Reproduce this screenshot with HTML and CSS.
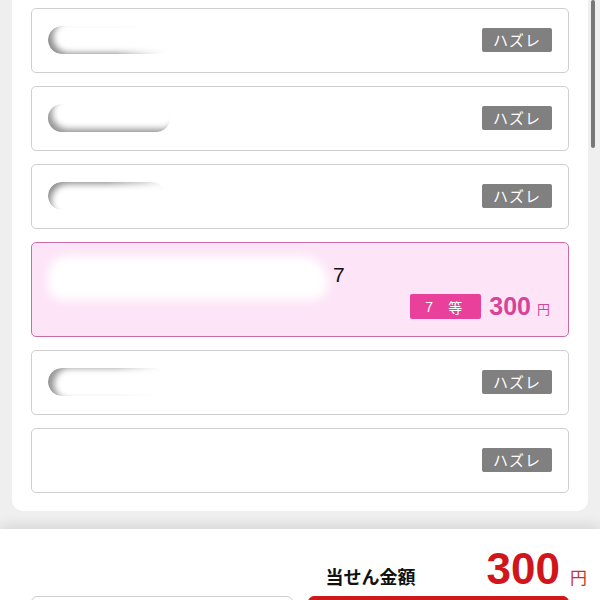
FILE: index.html
```html
<!DOCTYPE html>
<html lang="ja">
<head>
<meta charset="utf-8">
<title>当せん結果</title>
<link rel="stylesheet" href="styles.css">
</head>
<body>
<div class="page">
  <section class="panel">
    <div class="card">
      <div class="blob blob-a"></div>
      <span class="lose">ハズレ</span>
    </div>
    <div class="card">
      <div class="blob blob-b"></div>
      <span class="lose">ハズレ</span>
    </div>
    <div class="card">
      <div class="blob blob-c"></div>
      <span class="lose">ハズレ</span>
    </div>
    <div class="card card-win">
      <div class="win-top">
        <div class="blur"></div>
        <span class="win-num">7</span>
      </div>
      <div class="win-bottom">
        <span class="rank"><span>7</span><span>等</span></span>
        <span class="prize">300</span><span class="yen">円</span>
      </div>
    </div>
    <div class="card">
      <div class="blob blob-d"></div>
      <span class="lose">ハズレ</span>
    </div>
    <div class="card">
      <div class="blob blob-e"></div>
      <span class="lose">ハズレ</span>
    </div>
  </section>
  <footer class="footer">
    <div class="total">
      <span class="total-label">当せん金額</span>
      <span class="total-amount">300</span>
      <span class="total-yen">円</span>
    </div>
    <div class="actions">
      <button class="btn btn-sub"></button>
      <button class="btn btn-main"></button>
    </div>
  </footer>
  <div class="scrollbar"></div>
</div>
</body>
</html>
```
FILE: styles.css
```css
html, body {
  margin: 0;
  padding: 0;
}
body {
  background: #efefef;
  font-family: "Liberation Sans", "Noto Sans CJK JP", sans-serif;
  width: 600px;
  height: 600px;
  overflow: hidden;
}
.page {
  position: relative;
}
.panel {
  margin: 0 12px;
  background: #fff;
  border-radius: 0 0 11px 11px;
  padding: 8px 19px 18px;
  display: flex;
  flex-direction: column;
  gap: 13px;
}
.card {
  box-sizing: border-box;
  height: 65px;
  border: 1px solid #cfcfcf;
  border-radius: 5px;
  background: #fff;
  display: flex;
  align-items: center;
  justify-content: space-between;
  padding: 0 16px;
}
.lose {
  width: 70px;
  height: 24px;
  background: #808080;
  color: #fff;
  font-size: 15px;
  letter-spacing: 1px;
  border-radius: 2px;
  display: flex;
  align-items: center;
  justify-content: center;
  margin-top: -2px;
}
.blob {
  width: 122px;
  height: 28px;
  border-radius: 14px;
  margin-top: -2px;
  -webkit-mask-image: linear-gradient(to right, #000 55%, rgba(0,0,0,0.2) 85%, transparent);
  mask-image: linear-gradient(to right, #000 55%, rgba(0,0,0,0.2) 85%, transparent);
}
.blob-a {
  box-shadow: inset 7px -3px 6px -2px rgba(0,0,0,0.45);
}
.blob-b {
  box-shadow: inset 6px -5px 6px -2px rgba(0,0,0,0.42);
  -webkit-mask-image: none;
  mask-image: none;
}
.blob-c {
  width: 118px;
  box-shadow: inset 6px 5px 6px -3px rgba(0,0,0,0.45);
  -webkit-mask-image: linear-gradient(to right, #000 50%, rgba(0,0,0,0.5) 80%, transparent);
  mask-image: linear-gradient(to right, #000 50%, rgba(0,0,0,0.5) 80%, transparent);
}
.blob-d {
  width: 120px;
  box-shadow: inset 8px 2px 6px -2px rgba(0,0,0,0.42);
}
.blob-e {
  box-shadow: none;
}
.card-win {
  height: 95px;
  background: #fde5f7;
  border-color: #cc6aa8;
  flex-direction: column;
  align-items: stretch;
  justify-content: flex-start;
  padding: 15px 18px 17px 16px;
}
.win-top {
  height: 36px;
  display: flex;
  align-items: center;
  gap: 5px;
}
.blur {
  width: 280px;
  height: 44px;
  background: #fff;
  border-radius: 22px 30px 18px 16px;
  filter: blur(5px);
  margin-top: 4px;
}
.win-num {
  font-size: 21px;
  color: #111;
  margin-top: -2px;
}
.win-bottom {
  height: 25px;
  display: flex;
  align-items: center;
  justify-content: flex-end;
}
.rank {
  width: 71px;
  height: 25px;
  box-sizing: border-box;
  background: #e8409b;
  color: #fff;
  font-size: 14px;
  border-radius: 2px;
  display: flex;
  align-items: center;
  justify-content: space-between;
  padding: 0 19px 0 15px;
  margin-right: 8px;
}
.prize {
  font-size: 25px;
  font-weight: bold;
  color: #d6449a;
}
.yen {
  font-size: 13px;
  color: #d6449a;
  margin-left: 6px;
  margin-top: 3px;
}
.footer {
  margin-top: 18px;
  background: #fff;
  box-shadow: 0 -4px 12px rgba(0,0,0,0.10);
  padding-top: 18px;
}
.total {
  display: flex;
  align-items: baseline;
  justify-content: flex-end;
  padding-right: 13px;
  height: 42px;
}
.total-label {
  font-size: 18px;
  font-weight: bold;
  color: #111;
  margin-right: 71px;
}
.total-amount {
  font-size: 44px;
  font-weight: bold;
  color: #d0161b;
  line-height: 1;
}
.total-yen {
  font-size: 17px;
  color: #c93030;
  margin-left: 10px;
}
.actions {
  display: grid;
  grid-template-columns: 1fr 1fr;
  gap: 15px;
  padding: 7px 31px 0;
}
.btn {
  height: 50px;
  border-radius: 6px;
  border: 1px solid #cfcfcf;
  background: #fff;
}
.btn-main {
  background: #cc1a1a;
  border-color: #cc1a1a;
}
.scrollbar {
  position: absolute;
  top: 0;
  left: 591px;
  width: 4px;
  height: 148px;
  border-radius: 2px;
  background: #777;
}
```
